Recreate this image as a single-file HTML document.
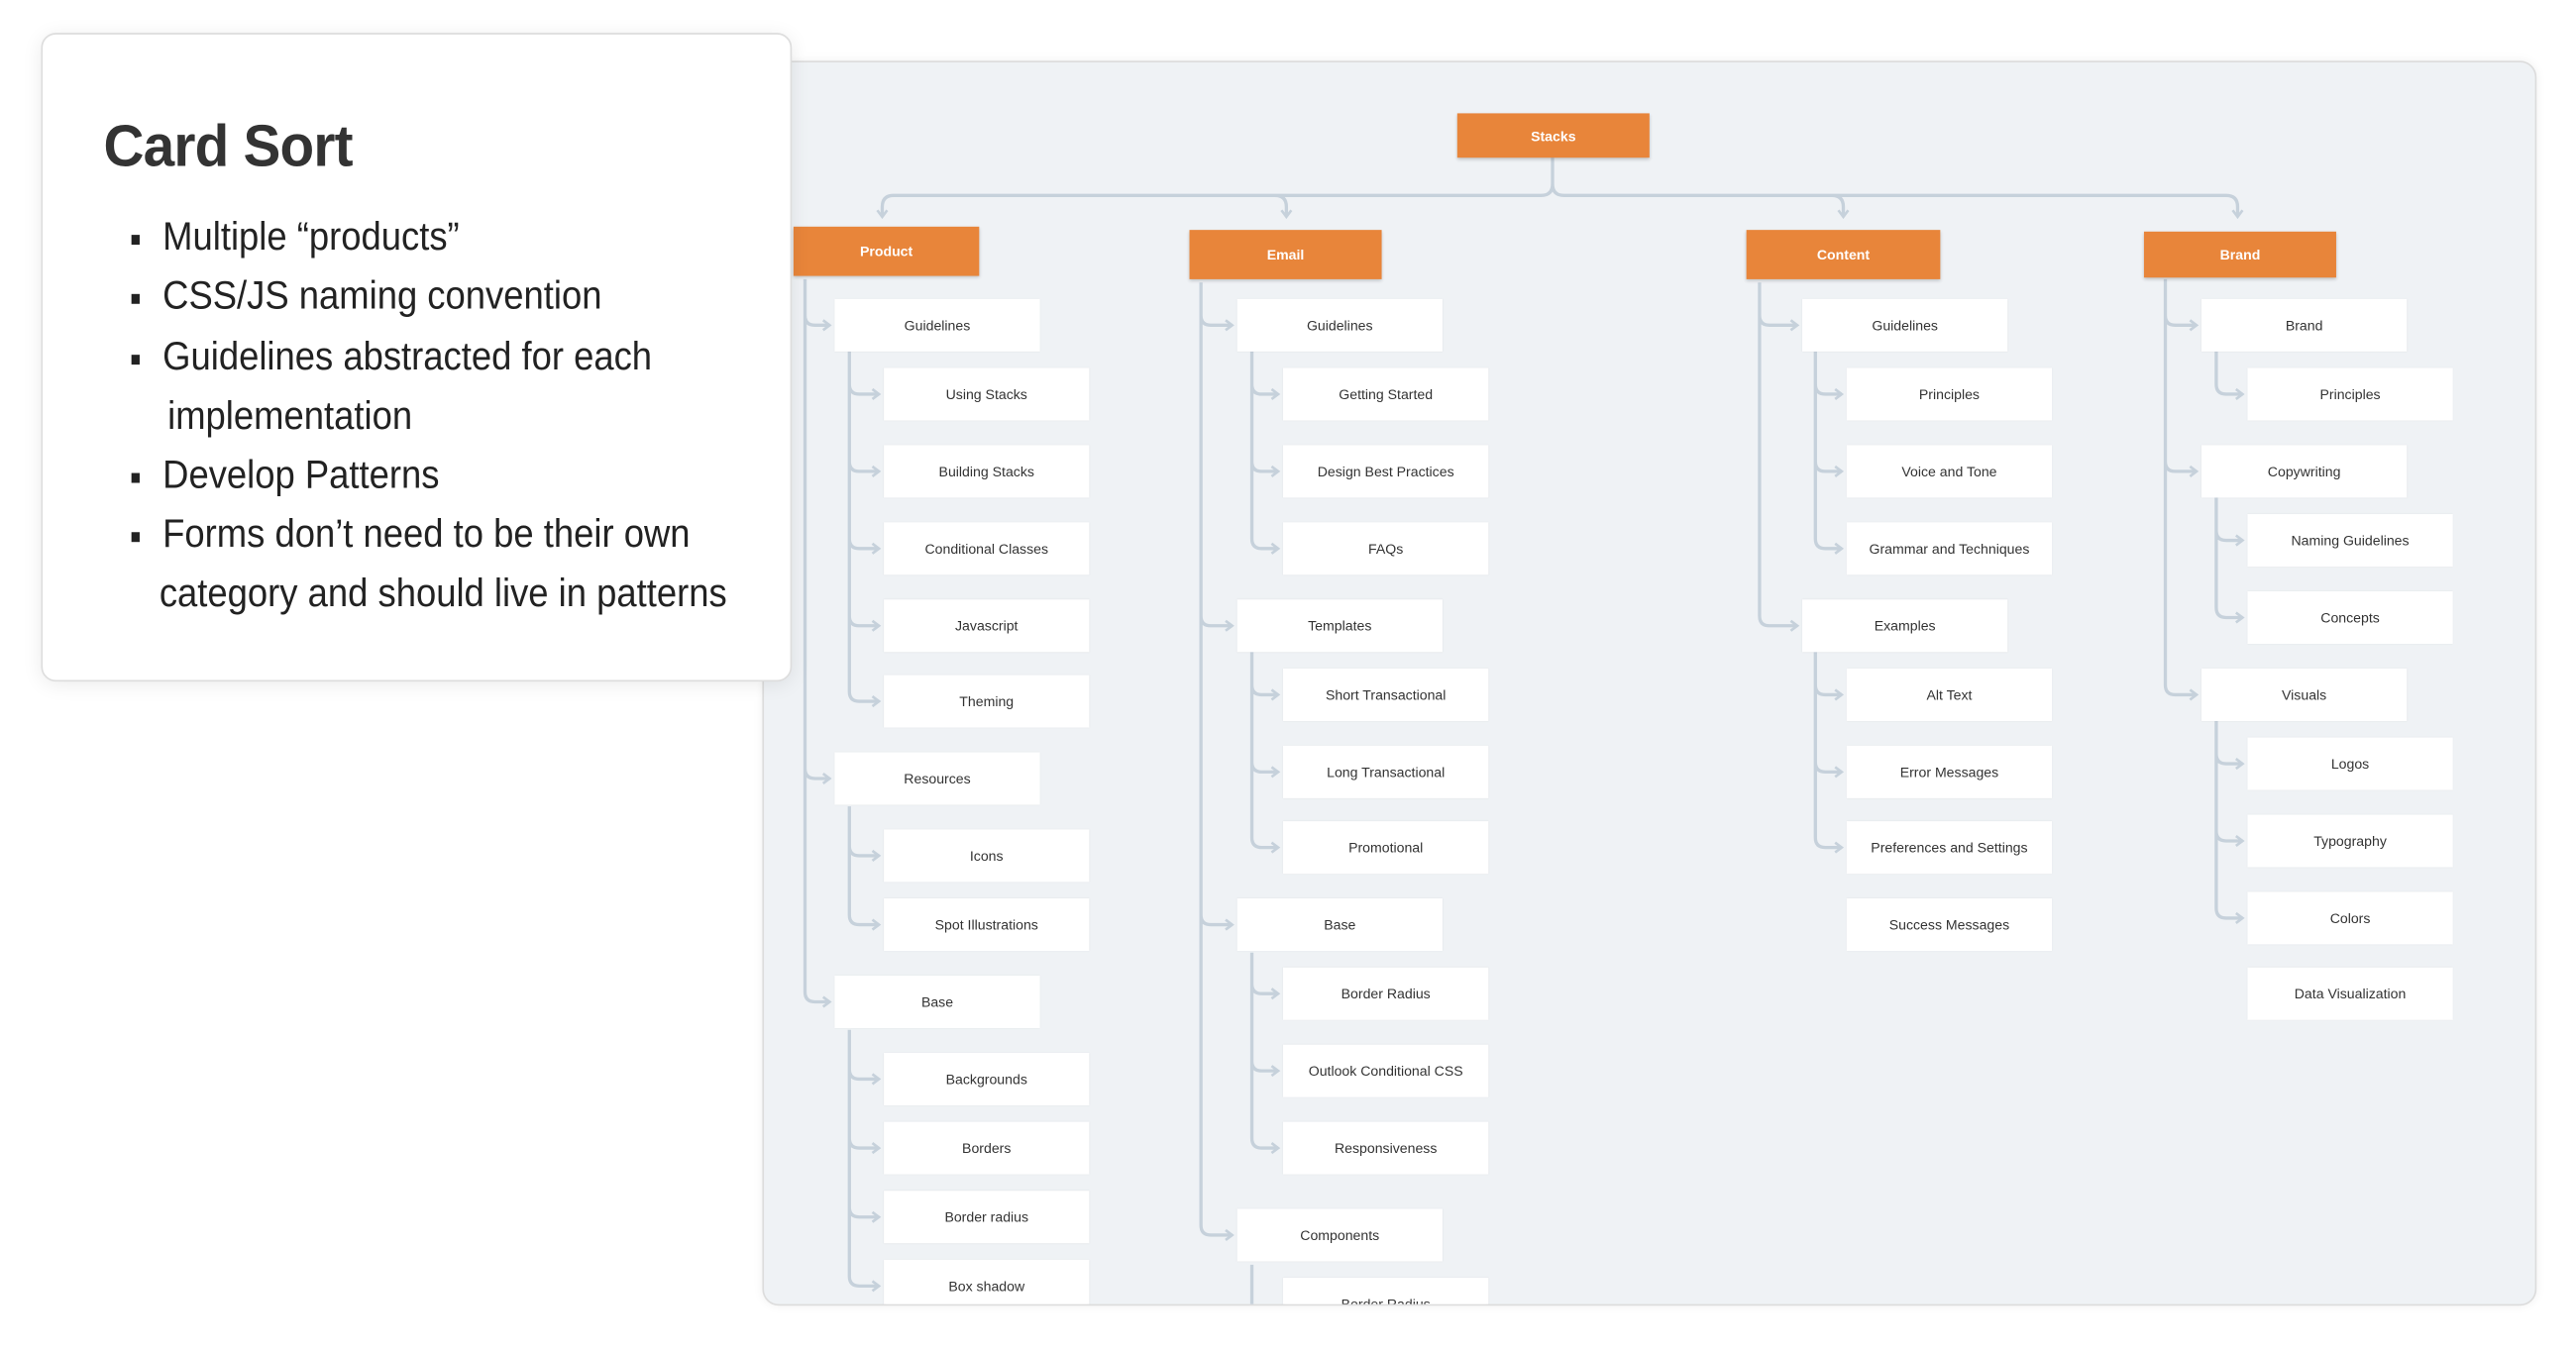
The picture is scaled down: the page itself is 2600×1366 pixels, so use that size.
<!DOCTYPE html>
<html><head><meta charset="utf-8"><style>
html,body{margin:0;padding:0;background:#fff;width:2600px;height:1366px;overflow:hidden}
#s{position:absolute;left:0;top:0;width:1568px;height:824px;transform:scale(1.6582);transform-origin:0 0}
#panel{position:absolute;left:464px;top:37px;width:1078px;height:756px;background:#eff2f5;border:1px solid #dcdcdc;border-radius:10px;overflow:hidden;box-shadow:0 0 6px rgba(0,0,0,.06)}
#inner{position:absolute;left:-465px;top:-38px;width:1568px;height:824px}
.o{position:absolute;background:#e8853a;color:#fff;font:bold 8.5px "Liberation Sans",sans-serif;display:flex;align-items:center;justify-content:center;box-shadow:0 1px 2px rgba(0,0,0,.2)}
.c{position:absolute;width:125px;height:32px;background:#fff;color:#333;font:8.5px "Liberation Sans",sans-serif;display:flex;align-items:center;justify-content:center;box-shadow:0 0 1px rgba(0,0,0,.08)}
#card{position:absolute;left:25px;top:20px;width:455px;height:393px;background:#fff;border:1px solid #ddd;border-radius:9px;box-shadow:0 2px 12px rgba(0,0,0,.08);font-family:"Liberation Sans",sans-serif;color:#222}
#card h1{position:absolute;left:37px;top:47px;margin:0;font:bold 36px "Liberation Sans",sans-serif;color:#333;letter-spacing:-0.5px;transform:scaleX(0.95);transform-origin:0 0}
.l{position:absolute;font-size:24px;line-height:30px;white-space:nowrap;transform:scaleX(0.915);transform-origin:0 0}
.b{position:absolute;width:5px;height:6px;background:#222;left:54px}
svg{position:absolute;left:0;top:0}
</style></head><body><div id="s">
<div id="panel"><div id="inner">
<svg id="lines" width="1568" height="824"></svg>
<div class="o" style="left:887px;top:69px;width:117px;height:27px">Stacks</div>
<div class="o" style="left:483px;top:138px;width:113px;height:30px">Product</div>
<div class="o" style="left:724px;top:140px;width:117px;height:30px">Email</div>
<div class="o" style="left:1063px;top:140px;width:118px;height:30px">Content</div>
<div class="o" style="left:1305px;top:141px;width:117px;height:28px">Brand</div>

<div class="c" style="left:508px;top:182px">Guidelines</div>
<div class="c" style="left:538px;top:224px">Using Stacks</div>
<div class="c" style="left:538px;top:271px">Building Stacks</div>
<div class="c" style="left:538px;top:318px">Conditional Classes</div>
<div class="c" style="left:538px;top:365px">Javascript</div>
<div class="c" style="left:538px;top:411px">Theming</div>
<div class="c" style="left:508px;top:458px">Resources</div>
<div class="c" style="left:538px;top:505px">Icons</div>
<div class="c" style="left:538px;top:547px">Spot Illustrations</div>
<div class="c" style="left:508px;top:594px">Base</div>
<div class="c" style="left:538px;top:641px">Backgrounds</div>
<div class="c" style="left:538px;top:683px">Borders</div>
<div class="c" style="left:538px;top:725px">Border radius</div>
<div class="c" style="left:538px;top:767px">Box shadow</div>

<div class="c" style="left:753px;top:182px">Guidelines</div>
<div class="c" style="left:781px;top:224px">Getting Started</div>
<div class="c" style="left:781px;top:271px">Design Best Practices</div>
<div class="c" style="left:781px;top:318px">FAQs</div>
<div class="c" style="left:753px;top:365px">Templates</div>
<div class="c" style="left:781px;top:407px">Short Transactional</div>
<div class="c" style="left:781px;top:454px">Long Transactional</div>
<div class="c" style="left:781px;top:500px">Promotional</div>
<div class="c" style="left:753px;top:547px">Base</div>
<div class="c" style="left:781px;top:589px">Border Radius</div>
<div class="c" style="left:781px;top:636px">Outlook Conditional CSS</div>
<div class="c" style="left:781px;top:683px">Responsiveness</div>
<div class="c" style="left:753px;top:736px">Components</div>
<div class="c" style="left:781px;top:778px">Border Radius</div>

<div class="c" style="left:1097px;top:182px">Guidelines</div>
<div class="c" style="left:1124px;top:224px">Principles</div>
<div class="c" style="left:1124px;top:271px">Voice and Tone</div>
<div class="c" style="left:1124px;top:318px">Grammar and Techniques</div>
<div class="c" style="left:1097px;top:365px">Examples</div>
<div class="c" style="left:1124px;top:407px">Alt Text</div>
<div class="c" style="left:1124px;top:454px">Error Messages</div>
<div class="c" style="left:1124px;top:500px">Preferences and Settings</div>
<div class="c" style="left:1124px;top:547px">Success Messages</div>

<div class="c" style="left:1340px;top:182px">Brand</div>
<div class="c" style="left:1368px;top:224px">Principles</div>
<div class="c" style="left:1340px;top:271px">Copywriting</div>
<div class="c" style="left:1368px;top:313px">Naming Guidelines</div>
<div class="c" style="left:1368px;top:360px">Concepts</div>
<div class="c" style="left:1340px;top:407px">Visuals</div>
<div class="c" style="left:1368px;top:449px">Logos</div>
<div class="c" style="left:1368px;top:496px">Typography</div>
<div class="c" style="left:1368px;top:543px">Colors</div>
<div class="c" style="left:1368px;top:589px">Data Visualization</div>
</div></div>

<div id="card">
<h1>Card Sort</h1>
<div class="b" style="top:122px"></div><div class="l" style="left:73px;top:109px">Multiple “products”</div>
<div class="b" style="top:158px"></div><div class="l" style="left:73px;top:145px">CSS/JS naming convention</div>
<div class="b" style="top:195px"></div><div class="l" style="left:73px;top:182px">Guidelines abstracted for each</div>
<div class="l" style="left:76px;top:218px">implementation</div>
<div class="b" style="top:267px"></div><div class="l" style="left:73px;top:254px">Develop Patterns</div>
<div class="b" style="top:303px"></div><div class="l" style="left:73px;top:290px">Forms don’t need to be their own</div>
<div class="l" style="left:71px;top:326px">category and should live in patterns</div>
</div>
</div>
<script>
var g=[[490,170,[198,474,610],508],[517,214,[240,287,334,381,427],538],[517,491,[521,563],538],[517,627,[657,699,741,783],538],
[731,172,[198,381,563,752],753],[762,214,[240,287,334],781],[762,397,[423,470,516],781],[762,580,[605,652,699],781],[762,770,[800],781],
[1071,172,[198,381],1097],[1105,214,[240,287,334],1124],[1105,397,[423,470,516],1124],
[1318,170,[198,287,423],1340],[1349,214,[240],1368],[1349,303,[329,376],1368],[1349,439,[465,512,559],1368]];
var d='',a='';
g.forEach(function(q){var x=q[0],t=q[1],ys=q[2],tx=q[3],last=ys[ys.length-1];
d+='M'+x+' '+t+'V'+(last-6)+' ';
ys.forEach(function(y){d+='M'+x+' '+(y-6)+'Q'+x+' '+y+' '+(x+6)+' '+y+'H'+(tx-3)+' ';a+='M'+(tx-7)+' '+(y-3)+'L'+(tx-3)+' '+y+'L'+(tx-7)+' '+(y+3)+' ';});});
d+='M945 96V112Q945 119 938 119H544Q537 119 537 126V131 M952 119H1355Q1362 119 1362 126V131 M776 119Q783 119 783 126V131 M1115 119Q1122 119 1122 126V131 M945 112Q945 119 952 119';
[537,783,1122,1362].forEach(function(x){a+='M'+(x-3)+' 128L'+x+' 132L'+(x+3)+' 128 ';});
document.getElementById('lines').innerHTML='<path d="'+d+'" fill="none" stroke="#c6d1db" stroke-width="2"/><path d="'+a+'" fill="none" stroke="#c6d1db" stroke-width="1.6"/>';
</script>
</body></html>
